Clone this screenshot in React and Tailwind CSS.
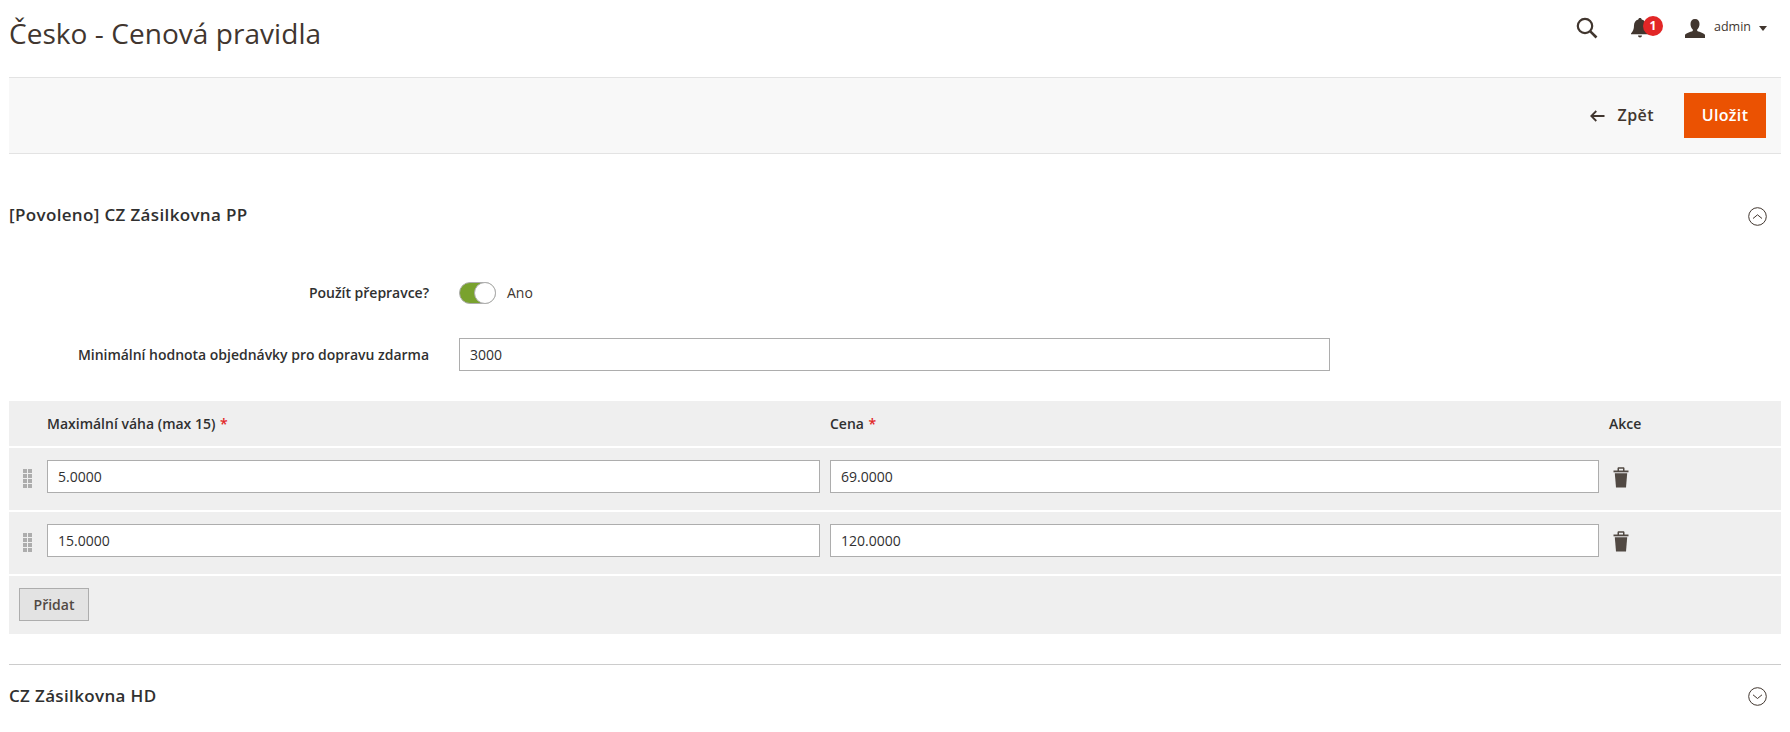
const font = { fontFamily: '"Open Sans", sans-serif' };

function Grip() {
  const cells = [];
  for (let r = 0; r < 4; r++) for (let c = 0; c < 2; c++) cells.push([c, r]);
  return (
    <svg width="9" height="19" viewBox="0 0 9 19" className="block">
      {cells.map(([c, r]) => (
        <rect key={c + "-" + r} x={c * 5} y={r * 5} width="4" height="4" fill="#adadad" />
      ))}
    </svg>
  );
}

function Trash() {
  return (
    <svg width="16" height="21" viewBox="0 0 16 21" className="block">
      <path d="M4.500 4V1.500C4.500.7 5 .2 5.800.2h4.400c.8 0 1.300.5 1.300 1.300V4H10V1.700H6V4z" fill="#514943" />
      <path d="M.5 3.500h15V5.300H.5z" fill="#514943" />
      <path d="M1.800 6.200h12.400L13 20.500H3z" fill="#514943" />
    </svg>
  );
}

function Chevron({ up }) {
  return (
    <svg width="19" height="19" viewBox="0 0 19 19" className="block">
      <circle cx="9.500" cy="9.500" r="8.800" fill="none" stroke="#41362f" strokeWidth="1" />
      <path d={up ? "M5 11.500L9.500 7.800l4.500 3.700" : "M5 7.800l4.500 3.700 4.500-3.700"} fill="none" stroke="#41362f" strokeWidth="1" />
    </svg>
  );
}

function Field({ value, className }) {
  return (
    <input
      readOnly
      value={value}
      className={"h-[33px] border border-[#adadad] bg-white px-[10px] text-[14px] text-[#303030] outline-none " + className}
    />
  );
}

function Row({ a, b }) {
  return (
    <div className="flex h-[62px] items-start bg-[#efefef] pt-[12px]">
      <div className="flex h-[33px] w-[38px] items-center justify-center pr-[2px] pt-[3px]">
        <Grip />
      </div>
      <Field value={a} className="w-[773px]" />
      <Field value={b} className="ml-[10px] w-[769px]" />
      <div className="ml-[14px] flex h-[33px] items-center pt-[1px]">
        <Trash />
      </div>
    </div>
  );
}

export default function App() {
  return (
    <div style={font} className="h-[732px] w-[1790px] overflow-hidden bg-white px-[9px] text-[#303030]">
      <header className="flex h-[77px] items-start justify-between">
        <h1 className="text-[28px] font-normal leading-[66px] tracking-[0.05px] text-[#41362f]">Česko - Cenová pravidla</h1>
        <div className="mr-[14px] flex h-[56px] items-center">
          <svg width="22" height="22" viewBox="0 0 22 22" className="mr-[33px]">
            <circle cx="9" cy="9" r="7.200" fill="none" stroke="#41362f" strokeWidth="2.200" />
            <path d="M14.300 14.300L20.500 20.500" stroke="#41362f" strokeWidth="2.600" />
          </svg>
          <div className="relative mr-[36px] h-[20px] w-[18px]">
            <svg width="18" height="20" viewBox="0 0 18 20" className="block">
              <path d="M9 0c1 0 1.700.7 1.700 1.600C13.500 2.300 15 4.700 15 7.500c0 3.500 1 5.800 3 8v.8H0v-.8c2-2.200 3-4.500 3-8 0-2.800 1.500-5.200 4.300-5.900C7.300.7 8 0 9 0z" fill="#41362f" />
              <path d="M7 17.500h4c0 1-1 2-2 2s-2-1-2-2z" fill="#41362f" />
            </svg>
            <span className="absolute left-[12px] top-[-2px] flex h-[20px] w-[20px] items-center justify-center rounded-full bg-[#e22626] text-[12px] font-bold leading-none text-white">
              1
            </span>
          </div>
          <svg width="20" height="19" viewBox="0 0 20 19" className="mr-[9px]">
            <path d="M10 0c3 0 4.500 2 4.500 5 0 2.500-1 4.500-2.300 5.600v1.500c2.800 1 7 2.200 7.800 4V19H0v-2.900c.8-1.800 5-3 7.800-4v-1.500C6.500 9.500 5.500 7.500 5.500 5 5.500 2 7 0 10 0z" fill="#41362f" />
          </svg>
          <span className="-mt-[1px] text-[12.5px] leading-none text-[#41362f]">admin</span>
          <svg width="8" height="5" viewBox="0 0 8 5" className="ml-[8px]">
            <path d="M0 0h8L4 5z" fill="#41362f" />
          </svg>
        </div>
      </header>

      <div className="flex h-[77px] items-center justify-end border-y border-[#e3e3e3] bg-[#f8f8f8] pr-[15px]">
        <svg width="15" height="12" viewBox="0 0 15 12" className="mr-[12px]">
          <path d="M14.500 6H1.500M6.300 1L1.300 6l5 5" fill="none" stroke="#41362f" strokeWidth="1.800" />
        </svg>
        <span className="mr-[30px] -mt-[1px] text-[16px] font-semibold tracking-[0.45px] text-[#41362f]">Zpět</span>
        <button className="h-[45px] w-[82px] bg-[#eb5202] pb-[2px] text-[16px] font-semibold tracking-[0.35px] text-white">
          Uložit
        </button>
      </div>

      <section className="flex h-[124px] items-center justify-between pr-[14px]">
        <h2 className="-mt-[2px] text-[17px] font-semibold tracking-[0.35px] text-[#303030]">[Povoleno] CZ Zásilkovna PP</h2>
        <Chevron up />
      </section>

      <div className="flex h-[30px] items-center">
        <label className="-mt-[1px] w-[420px] text-right text-[14px] font-semibold tracking-[-0.02px]">Použít přepravce?</label>
        <div className="relative ml-[30px] h-[22px] w-[37px] rounded-full border border-[#adadad] bg-[#79a22e]">
          <span className="absolute right-[-1px] top-[-1px] h-[22px] w-[22px] rounded-full border border-[#adadad] bg-white" />
        </div>
        <span className="-mt-[1px] ml-[11px] text-[14px] text-[#41362f]">Ano</span>
      </div>

      <div className="mt-[30px] flex h-[33px] items-center">
        <label className="w-[420px] text-right text-[14px] font-semibold tracking-[-0.02px]">
          Minimální hodnota objednávky pro dopravu zdarma
        </label>
        <Field value="3000" className="ml-[30px] w-[871px]" />
      </div>

      <div className="mt-[30px] flex flex-col gap-[2px]">
        <div className="flex h-[45px] items-center bg-[#efefef] text-[14px] font-semibold">
          <div className="w-[38px]" />
          <div className="w-[783px]">
            Maximální váha (max 15) <span className="ml-[1px] text-[#e22626]">*</span>
          </div>
          <div className="w-[779px]">
            Cena <span className="ml-[1px] text-[#e22626]">*</span>
          </div>
          <div>Akce</div>
        </div>
        <Row a="5.0000" b="69.0000" />
        <Row a="15.0000" b="120.0000" />
        <div className="flex h-[58px] items-start bg-[#efefef] pl-[10px] pt-[12px]">
          <button className="h-[33px] w-[70px] border border-[#adadad] bg-[#e3e3e3] text-[14px] font-semibold text-[#514943]">
            Přidat
          </button>
        </div>
      </div>

      <div className="mt-[30px] flex h-[64px] items-center justify-between border-t border-[#cccccc] pr-[14px]">
        <h2 className="-mt-[1px] text-[17px] font-semibold tracking-[0.35px] text-[#303030]">CZ Zásilkovna HD</h2>
        <Chevron />
      </div>
    </div>
  );
}
